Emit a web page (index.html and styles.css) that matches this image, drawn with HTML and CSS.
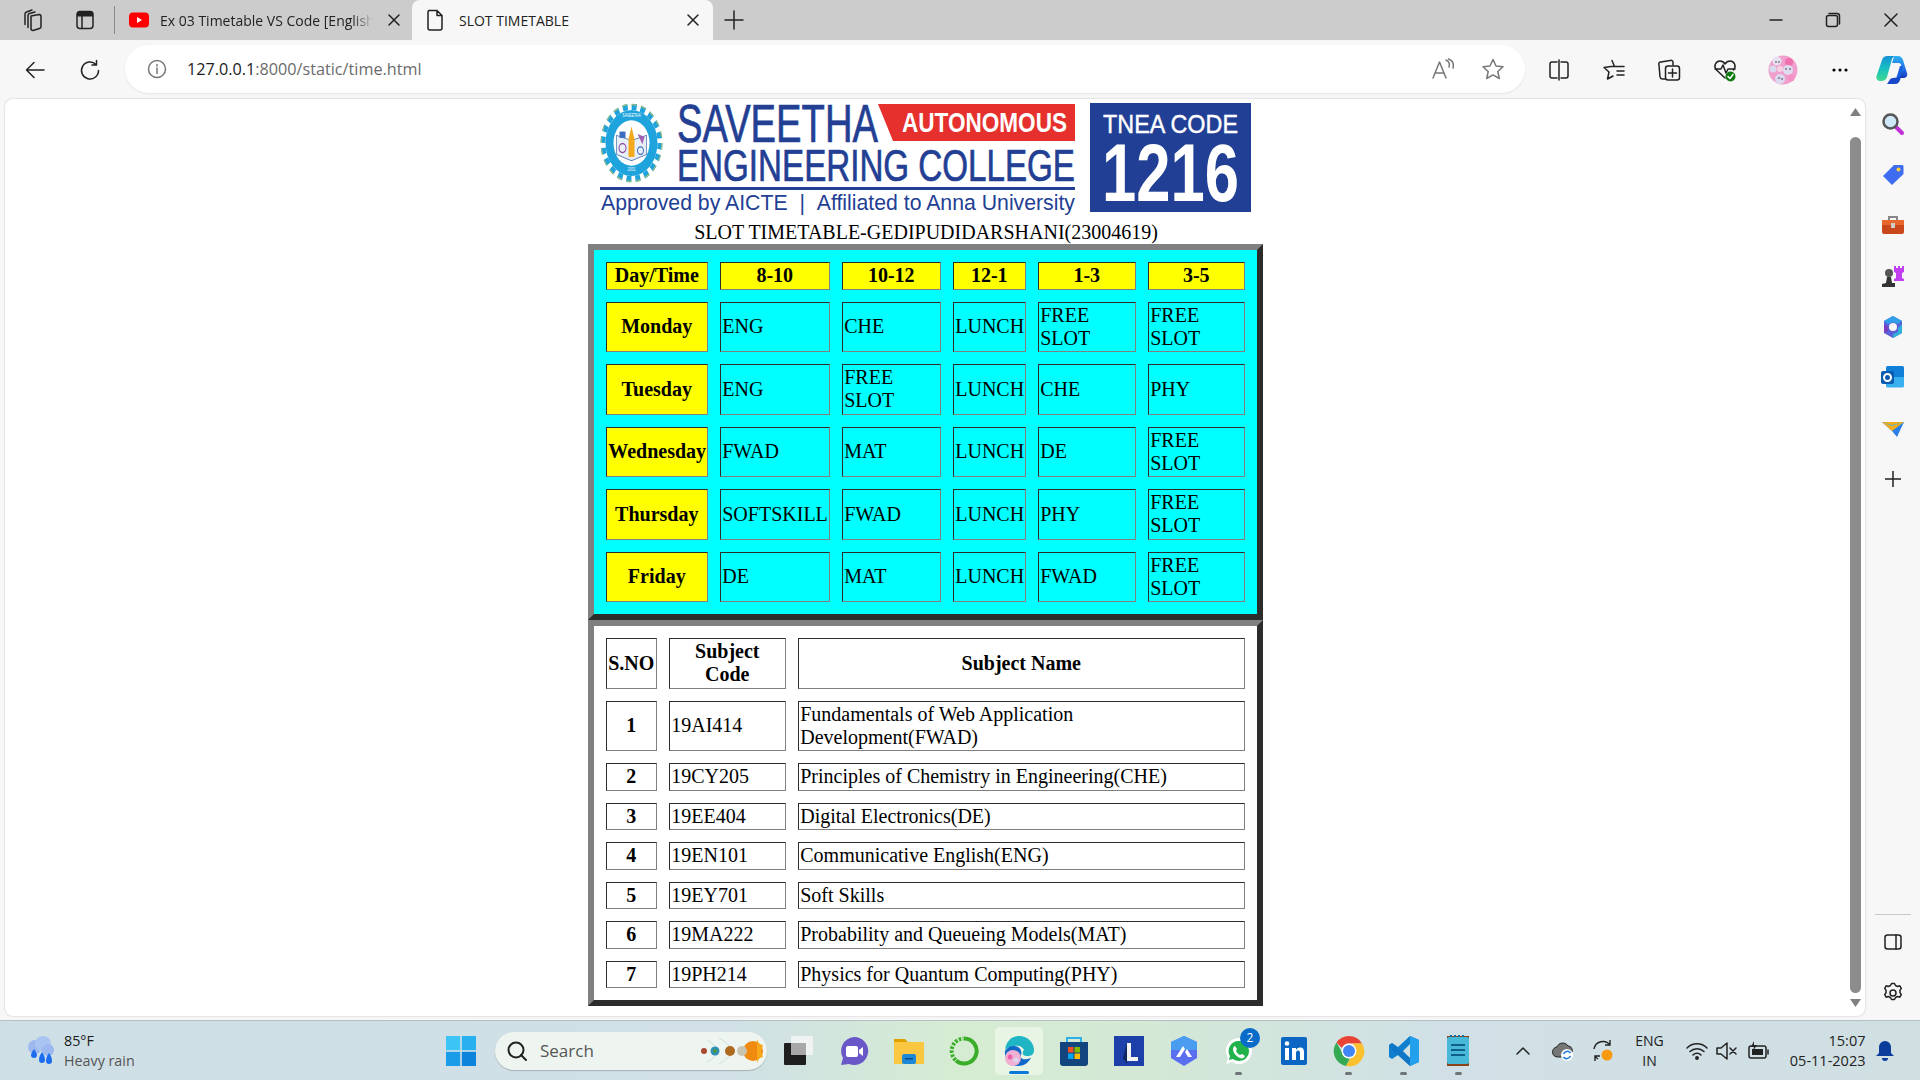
FILE: index.html
```html
<!DOCTYPE html>
<html lang="en">
<head>
<meta charset="utf-8">
<title>SLOT TIMETABLE</title>
<link rel="stylesheet" href="styles.css">
</head>
<body>
<div class="tabstrip">
  <div class="sbox w64"><svg class="i" width="24" height="24" viewBox="0 0 24 24"><path d="M11 8L19 6.500a2 2 0 0 1 2 2V18.500a2 2 0 0 1-1.500 2L13 22.500a2 2 0 0 1-2-2zM8 19.500V7.500a2 2 0 0 1 1.500-2L15 4M5 16.500V6a2 2 0 0 1 1.500-2L12 2"/></svg></div>
  <div class="sbox w42"><svg class="i" width="24" height="24" viewBox="0 0 24 24"><rect x="4" y="3.500" width="16" height="17" rx="3"/><path d="M9 8v12.500"/><path class="fill" d="M7 3h10a3 3 0 0 1 3 3v2.500H4V6a3 3 0 0 1 3-3z"/></svg></div>
  <div class="vsep"></div>
  <div class="tab">
    <svg width="20" height="16" viewBox="0 0 20 16"><rect width="20" height="15" y="0.500" rx="4" fill="#f00"/><path d="M8 5l5 3-5 3z" fill="#fff"/></svg>
    <span class="tabtext fade">Ex 03 Timetable VS Code [English</span>
    <svg class="i close" width="14" height="14" viewBox="0 0 14 14"><path d="M2 2l10 10M12 2L2 12"/></svg>
  </div>
  <div class="tab active">
    <svg class="i" width="18" height="22" viewBox="0 0 18 22"><path d="M3 1.500h8l5 5v12.500a2 2 0 0 1-2 2H4a2 2 0 0 1-2-2V3a2 2 0 0 1 1-1.500zM11 1.500v5h5"/></svg>
    <span class="tabtext">SLOT TIMETABLE</span>
    <svg class="i close" width="14" height="14" viewBox="0 0 14 14"><path d="M2 2l10 10M12 2L2 12"/></svg>
  </div>
  <div class="sbox w42"><svg class="i" width="20" height="20" viewBox="0 0 20 20"><path d="M10 1v18M1 10h18"/></svg></div>
  <div class="grow"></div>
  <div class="sbox w58"><svg class="i" width="14" height="14" viewBox="0 0 14 14"><path d="M1 7h12"/></svg></div>
  <div class="sbox w58"><svg class="i" width="16" height="16" viewBox="0 0 16 16"><rect x="1.500" y="3.500" width="11" height="11" rx="2"/><path d="M4 1.500h8a2.500 2.500 0 0 1 2.500 2.500v8"/></svg></div>
  <div class="sbox w58"><svg class="i" width="16" height="16" viewBox="0 0 16 16"><path d="M2 2l12 12M14 2L2 14"/></svg></div>
</div>

<div class="toolbar">
  <div class="navbox"><svg class="i" width="22" height="22" viewBox="0 0 22 22"><path d="M20 11H3M10 3.500L2.500 11l7.500 7.500"/></svg></div>
  <div class="navbox"><svg class="i" width="22" height="22" viewBox="0 0 22 22"><path d="M17 5.500a8.500 8.500 0 1 0 2.500 6M17.500 1.500v4.500H13"/></svg></div>
  <div class="address">
    <svg class="i gr" width="20" height="20" viewBox="0 0 20 20"><circle cx="10" cy="10" r="8.500"/><path d="M10 9v5.500M10 5.500v1.500"/></svg>
    <span class="url"><span class="host">127.0.0.1</span>:8000/static/time.html</span>
    <span class="grow"></span>
    <svg class="i gr" width="24" height="22" viewBox="0 0 24 22"><path d="M2 20L8.500 4 15 20M4.500 15h8M15 2c3 1 4 4 3 7M17.500 1c4 1.500 5.500 5 4.500 9"/></svg>
    <svg class="i gr star" width="24" height="24" viewBox="0 0 24 24"><path d="M12 2.500l3 6.500 7 .8-5.200 4.700 1.500 7L12 17.900l-6.300 3.600 1.500-7L2 9.800 9 9z"/></svg>
  </div>
  <div class="tools">
    <div class="tool"><svg class="i" width="22" height="22" viewBox="0 0 22 22"><path d="M9 3H4a2 2 0 0 0-2 2v12a2 2 0 0 0 2 2h5M13 3h5a2 2 0 0 1 2 2v12a2 2 0 0 1-2 2h-5M11 1v20"/></svg></div>
    <div class="tool"><svg class="i" width="24" height="24" viewBox="0 0 24 24"><path d="M10 2.500l2.500 6H9l-7 1 5 4.500-1.500 7L11 18M12.500 8.500H22M15 13h7M15 17h7"/></svg></div>
    <div class="tool"><svg class="i" width="24" height="24" viewBox="0 0 24 24"><path d="M8 21H6a3 3 0 0 1-3-2L2 7a2 2 0 0 1 2-3l9-1.500a2 2 0 0 1 3 2V7"/><rect x="8.500" y="8" width="14" height="14" rx="2.500"/><path d="M15.500 11v8M11.500 15h8"/></svg></div>
    <div class="tool"><svg class="i" width="24" height="24" viewBox="0 0 24 24"><path d="M12 20L3.500 12C0 8 3 3 7 3c2.500 0 4 1.500 5 3 1-1.500 2.500-3 5-3 4 0 7 5 3.500 9M2 11h6l2-4 3 8 2-4h7"/><circle cx="17.500" cy="18.500" r="5" fill="#0f7b0f" stroke="none"/><path class="wht" d="M15 18.500l2 2 3-4"/></svg></div>
    <div class="tool pf"><svg width="30" height="30" viewBox="0 0 30 30"><circle cx="15" cy="15" r="14.500" fill="#f0a0cc"/><circle cx="9" cy="6" r="4.500" fill="#e6e2f2"/><circle cx="5" cy="14" r="3.500" fill="#d8d8ee"/><circle cx="21" cy="7" r="4" fill="#f070b0"/><circle cx="20" cy="15" r="5" fill="#e0dcf0"/><circle cx="12" cy="14" r="3" fill="#f8d0e4"/><circle cx="12" cy="24" r="5" fill="#dcd8f0"/><circle cx="23" cy="23" r="3.500" fill="#f490c4"/><circle cx="8" cy="7" r=".8" fill="#333"/><circle cx="11" cy="7" r=".8" fill="#333"/><circle cx="18" cy="14" r=".8" fill="#333"/><circle cx="22" cy="14" r=".8" fill="#333"/><circle cx="11" cy="23" r=".8" fill="#333"/><circle cx="14" cy="24" r=".8" fill="#333"/></svg></div>
    <div class="tool dots"><svg width="18" height="6" viewBox="0 0 18 6"><circle cx="3" cy="3" r="1.600"/><circle cx="9" cy="3" r="1.600"/><circle cx="15" cy="3" r="1.600"/></svg></div>
    <div class="tool cop"><svg width="32" height="30" viewBox="0 0 32 30">
      <defs>
        <linearGradient id="cl" x1="0" y1="0" x2="0" y2="1"><stop offset="0" stop-color="#1590d8"/><stop offset=".5" stop-color="#18c0c0"/><stop offset="1" stop-color="#40d890"/></linearGradient>
        <linearGradient id="cr" x1="0" y1="0" x2="0" y2="1"><stop offset="0" stop-color="#30b0f0"/><stop offset=".6" stop-color="#2070e8"/><stop offset="1" stop-color="#1838b8"/></linearGradient>
      </defs>
      <path d="M11 1h9c-2 0-3 1-4 3L11 22c-1 3-3 4-6 4H4c-3 0-4-3-3.500-5L6 5c1-3 3-4 5-4z" fill="url(#cl)"/>
      <path d="M18 1h4c3 0 4 2 5 4l4 13c1 3-1 5-4 5h-5l3-11c1-3-1-4-3-4h-6l1-3c1-3 1-4 1-4z" fill="url(#cr)"/>
      <path d="M14 29c3 0 5-2 6-5l4-13 3 0-4 14c-1 3-3 4-5 4z" fill="#1a60e0"/>
      <path d="M11 29h8c2 0 4-1 5-4l1-3-8 1c-2 0-3 1-4 3z" fill="#1848c8"/>
    </svg></div>
  </div>
</div>

<div class="main">
  <div class="panel">
    <div class="page">
      <svg class="logo" width="675" height="121" viewBox="588 99 675 121">
        <g transform="translate(631.500 143) scale(1 1.27)">
          <circle r="26" fill="#1ea3dc"/>
          <circle r="28.500" fill="none" stroke="#1ea3dc" stroke-width="5" stroke-dasharray="5 3.950"/>
          <circle r="30.300" fill="none" stroke="#d8c94a" stroke-width="1" stroke-dasharray="5 4.500" opacity=".7"/>
          <circle r="18" fill="#fff"/>
          <path d="M-15 -6L0 -2 15 -6V9L0 14-15 9z" fill="#e9eff7" stroke="#5b7fb6" stroke-width=".8"/>
          <path d="M0 -13L3 -3V11H-3V-3z" fill="#f4a91d"/>
          <circle cx="-9" cy="4" r="3.500" fill="none" stroke="#8a3fa0" stroke-width="1"/>
          <rect x="-12" y="-9" width="6" height="5" fill="#3b6cc0"/>
          <path d="M6 -7l7 2-2 6z" fill="#a060b0"/>
          <circle cx="9" cy="6" r="3" fill="none" stroke="#3b6cc0" stroke-width="1"/>
          <text class="lg-tiny" y="-20.500" text-anchor="middle">SAVEETHA</text>
          <text class="lg-tiny" y="22" text-anchor="middle">2001</text>
        </g>
        <text class="lg heavy" x="677" y="142" font-size="53" textLength="201" lengthAdjust="spacingAndGlyphs">SAVEETHA</text>
        <path d="M878 104H1075V141H893z" fill="#e5302e"/>
        <text class="lg-w lg-b" x="902" y="132" font-size="28" textLength="165" lengthAdjust="spacingAndGlyphs">AUTONOMOUS</text>
        <text class="lg heavy" x="677" y="181" font-size="43.500" textLength="398" lengthAdjust="spacingAndGlyphs">ENGINEERING COLLEGE</text>
        <rect x="600" y="187" width="475" height="3" fill="#233f94"/>
        <text class="lg" x="601" y="210" font-size="22.500" textLength="474" lengthAdjust="spacingAndGlyphs">Approved by AICTE &#160;| &#160;Affiliated to Anna University</text>
        <rect x="1090" y="103" width="161" height="109" fill="#213f94"/>
        <text class="lg-w heavyw" x="1103" y="133" font-size="25.500" textLength="135" lengthAdjust="spacingAndGlyphs">TNEA CODE</text>
        <text class="lg-w lg-b" x="1102" y="201" font-size="81" textLength="137" lengthAdjust="spacingAndGlyphs">1216</text>
      </svg>
      <div class="title">SLOT TIMETABLE-GEDIPUDIDARSHANI(23004619)</div>
      <table class="tt slot">
        <colgroup><col class="c1"><col class="c2"><col class="c3"><col class="c4"><col class="c5"><col class="c6"></colgroup>
        <tr><th>Day/Time</th><th>8-10</th><th>10-12</th><th>12-1</th><th>1-3</th><th>3-5</th></tr>
        <tr><th>Monday</th><td>ENG</td><td>CHE</td><td>LUNCH</td><td>FREE SLOT</td><td>FREE SLOT</td></tr>
        <tr><th>Tuesday</th><td>ENG</td><td>FREE SLOT</td><td>LUNCH</td><td>CHE</td><td>PHY</td></tr>
        <tr><th>Wednesday</th><td>FWAD</td><td>MAT</td><td>LUNCH</td><td>DE</td><td>FREE SLOT</td></tr>
        <tr><th>Thursday</th><td>SOFTSKILL</td><td>FWAD</td><td>LUNCH</td><td>PHY</td><td>FREE SLOT</td></tr>
        <tr><th>Friday</th><td>DE</td><td>MAT</td><td>LUNCH</td><td>FWAD</td><td>FREE SLOT</td></tr>
      </table>
      <table class="tt subj">
        <colgroup><col class="s1"><col class="s2"><col class="s3"></colgroup>
        <tr><th>S.NO</th><th>Subject Code</th><th>Subject Name</th></tr>
        <tr><th>1</th><td>19AI414</td><td>Fundamentals of Web Application Development(FWAD)</td></tr>
        <tr><th>2</th><td>19CY205</td><td>Principles of Chemistry in Engineering(CHE)</td></tr>
        <tr><th>3</th><td>19EE404</td><td>Digital Electronics(DE)</td></tr>
        <tr><th>4</th><td>19EN101</td><td>Communicative English(ENG)</td></tr>
        <tr><th>5</th><td>19EY701</td><td>Soft Skills</td></tr>
        <tr><th>6</th><td>19MA222</td><td>Probability and Queueing Models(MAT)</td></tr>
        <tr><th>7</th><td>19PH214</td><td>Physics for Quantum Computing(PHY)</td></tr>
      </table>
    </div>
    <div class="scroll">
      <svg width="11" height="8" viewBox="0 0 11 8"><path d="M5.500 0L11 8H0z" fill="#808080"/></svg>
      <div class="thumb"></div>
      <svg width="11" height="8" viewBox="0 0 11 8"><path d="M0 0h11L5.500 8z" fill="#808080"/></svg>
    </div>
  </div>
  <div class="side">
    <div class="sicon"><svg width="24" height="24" viewBox="0 0 24 24"><path d="M14 14l7 7" stroke="#c030d8" stroke-width="4" stroke-linecap="round"/><circle cx="9.500" cy="9.500" r="7" fill="#cfe8f8" stroke="#555" stroke-width="2.500"/></svg></div>
    <div class="sicon"><svg width="24" height="24" viewBox="0 0 24 24"><path d="M13 2h8a1.500 1.500 0 0 1 1.500 1.500V11L11 22 2 13z" fill="#3f6cf0"/><circle cx="17.500" cy="6.500" r="2" fill="#f8d040"/></svg></div>
    <div class="sicon"><svg width="24" height="24" viewBox="0 0 24 24"><path d="M8 7V4h8v3" fill="none" stroke="#888" stroke-width="2"/><rect x="1" y="7" width="22" height="14" rx="2" fill="#c8481c"/><rect x="1" y="7" width="22" height="5" fill="#e8672c"/><rect x="10" y="10" width="4" height="5" fill="#ccc"/></svg></div>
    <div class="sicon"><svg width="24" height="24" viewBox="0 0 24 24"><path d="M13 2h2v2h2V2h2v2h2V2h2v6l-2 1v5l2 1v2H13v-2l2-1V9l-2-1z" fill="#c040f0"/><circle cx="8" cy="9" r="4" fill="#555"/><path d="M6 13h4l1 6h3v4H1v-3l4-1z" fill="#333"/></svg></div>
    <div class="sicon"><svg width="24" height="24" viewBox="0 0 24 24"><path d="M12 1l9 5v12l-9 5-9-5V6z" fill="#5a5fd8"/><path d="M3 6l9-5 9 5-4 3-5-2-5 2z" fill="#2f9fe8"/><path d="M3 18V9l4 3v4z" fill="#7a3fc0"/><path d="M12 23l9-5V9l-4 4v4l-5 2z" fill="#2fb0d8"/><circle cx="12" cy="12" r="4" fill="#f6f6f6"/></svg></div>
    <div class="sicon"><svg width="24" height="24" viewBox="0 0 24 24"><rect x="5" y="1" width="18" height="20" rx="1.500" fill="#0f7fd8"/><path d="M5 12h18v9a1.500 1.500 0 0 1-1.500 1.500h-15A1.500 1.500 0 0 1 5 21z" fill="#38b0f0"/><rect x="0" y="6" width="13" height="13" rx="2" fill="#0a5cb0"/><circle cx="6.500" cy="12.500" r="3.500" fill="none" stroke="#fff" stroke-width="2"/></svg></div>
    <div class="sicon"><svg width="24" height="24" viewBox="0 0 24 24"><path d="M1 6h22L16 21l-5-6z" fill="#2a80e8"/><path d="M1 6l22 0-12 9z" fill="#f4ae1c"/><path d="M1 6l10 3 12-3-12 4z" fill="#40b0f0"/></svg></div>
    <div class="sicon"><svg class="i" width="16" height="16" viewBox="0 0 16 16"><path d="M8 0v16M0 8h16"/></svg></div>
    <div class="grow"></div>
    <div class="hline"></div>
    <div class="sicon"><svg class="i" width="20" height="20" viewBox="0 0 20 20"><rect x="2" y="3" width="16" height="14" rx="2.500"/><path d="M13 3v14"/></svg></div>
    <div class="sicon last"><svg class="i" width="22" height="22" viewBox="0 0 22 22"><circle cx="11" cy="11" r="3"/><path d="M8.500 3.500L9.500 1.500h3l1 2 2.200 1 2.100-.7 1.500 2.600-1.300 1.800v2.600l1.300 1.800-1.500 2.600-2.100-.7-2.200 1-1 2h-3l-1-2-2.200-1-2.100.7-1.500-2.600 1.300-1.800V8.200L2.700 6.400l1.500-2.600 2.100.7z"/></svg></div>
  </div>
</div>

<div class="taskbar">
  <div class="weather">
    <svg width="32" height="32" viewBox="0 0 32 32"><circle cx="11" cy="12" r="7" fill="#9cb8ee"/><circle cx="19" cy="9" r="8" fill="#aac4f2"/><circle cx="24" cy="15" r="6" fill="#9cb8ee"/><path d="M10 14c2 3 3 5 3 6a3 3 0 0 1-6 0c0-1 1-3 3-6zM18 17c2 3 3 5 3 8a3 3 0 0 1-6 0c0-3 1-5 3-8zM25 18c2 3 3 5 3 8a3 3 0 0 1-6 0c0-3 1-5 3-8z" fill="#1c6cf0"/></svg>
    <div class="wtext"><div class="tdark">85°F</div><div class="tgray">Heavy rain</div></div>
  </div>
  <svg class="win" width="30" height="30" viewBox="0 0 30 30"><rect width="14.200" height="14.200" fill="#3cc4f4"/><rect x="15.800" width="14.200" height="14.200" fill="#28b0f0"/><rect y="15.800" width="14.200" height="14.200" fill="#1a9ce8"/><rect x="15.800" y="15.800" width="14.200" height="14.200" fill="#0c84dc"/></svg>
  <div class="search">
    <svg class="i sg" width="22" height="22" viewBox="0 0 22 22"><circle cx="10" cy="10" r="7.500"/><path d="M15 15l5 5"/></svg>
    <span class="stext">Search</span>
    <span class="grow"></span>
    <svg width="62" height="30" viewBox="0 0 62 30"><path d="M6 4q20 11 0 22M18 2q24 13 0 26" fill="none" stroke="#cfe0d8"/><circle cx="52" cy="15" r="10" fill="#f08a10"/><path d="M56 3l2 5 4 1-2 6 2 6-4 1-2 5z" fill="#f8a818"/><circle cx="41" cy="15" r="5" fill="#c8c4b0"/><circle cx="29" cy="15" r="5" fill="#b06a20"/><circle cx="14" cy="15" r="4.500" fill="#2f8fb8"/><circle cx="14" cy="15" r="2" fill="#4a9a40"/><circle cx="3" cy="15" r="3" fill="#a84a30"/></svg>
  </div>
  <div class="apps">
    <div class="app"><svg width="30" height="30" viewBox="0 0 30 30"><rect x="0" y="7" width="22" height="22" rx="1" fill="#1e1e1e"/><rect x="7" y="0" width="22" height="19" rx="1" fill="#f6f6f6" opacity=".85"/><rect x="7" y="7" width="15" height="12" fill="#a8a8a8"/></svg></div>
    <div class="app"><svg width="30" height="30" viewBox="0 0 30 30"><path d="M15 1a14 14 0 1 1-5 27l-8 1 2-7A14 14 0 0 1 15 1z" fill="#6a58c8"/><rect x="7" y="10" width="12" height="11" rx="2" fill="#fff"/><path d="M20 14l4-3v9l-4-3z" fill="#fff"/></svg></div>
    <div class="app"><svg width="30" height="30" viewBox="0 0 30 30"><path d="M0 3h11l3 3h16v6H0z" fill="#e0a000"/><path d="M0 6h30v22H0z" fill="#fbc640"/><rect x="8" y="18" width="14" height="10" rx="2" fill="#1e88d8"/><rect x="11" y="22" width="8" height="1.500" fill="#0a4a88"/></svg></div>
    <div class="app"><svg width="30" height="32" viewBox="0 0 30 32"><path d="M15 3.500a12.500 12.500 0 1 1-8 22" fill="none" stroke="#3aae28" stroke-width="4"/><path d="M6.500 25a12.500 12.500 0 0 1 8-21.500" fill="none" stroke="#3aae28" stroke-width="4" stroke-dasharray="2.500 1.500"/></svg></div>
    <div class="app current"><svg width="32" height="32" viewBox="0 0 32 32"><path d="M2 15C3 6 9 1 16 1c9 0 15 7 15 14 0 5-3 6-7 6-5 0-5-4-3-6-1-3-5-5-9-4-5 1-9 2-10 4z" fill="#1fb5c4"/><path d="M2 16c3-5 9-6 13-4 3 2 4 5 3 8-1 5 4 5 10 3-3 5-7 8-13 8-8 0-14-7-13-15z" fill="#0f67c8"/><ellipse cx="10" cy="23" rx="8" ry="8" fill="#efb0d4"/><circle cx="7" cy="22" r="2.500" fill="#f05fa8"/><circle cx="13" cy="25" r="2.500" fill="#dcd4ec"/></svg></div>
    <div class="app"><svg width="30" height="32" viewBox="0 0 30 32"><path d="M8 7V3h14v4" fill="none" stroke="#2fb0e8" stroke-width="2"/><path d="M1 7h28v21a3 3 0 0 1-3 3H4a3 3 0 0 1-3-3z" fill="#12457e"/><rect x="9" y="12" width="5.500" height="5.500" fill="#f25022"/><rect x="15.500" y="12" width="5.500" height="5.500" fill="#7fba00"/><rect x="9" y="18.500" width="5.500" height="5.500" fill="#00a4ef"/><rect x="15.500" y="18.500" width="5.500" height="5.500" fill="#ffb900"/></svg></div>
    <div class="app"><svg width="30" height="30" viewBox="0 0 30 30"><rect width="30" height="30" fill="#1c3faa"/><path d="M9 22l4-15v21z" fill="#0f2860"/><path d="M13 7h4v14h7v4H13z" fill="#f4f4f4"/></svg></div>
    <div class="app"><svg width="30" height="32" viewBox="0 0 30 32"><path d="M15 1l13 6 0 16-13 8-13-8V7z" fill="#5a6ff0"/><path d="M2 7l13-6 13 6v8H2z" fill="#4a9cf0"/><path d="M7 22l7-11 2 3-5 8zM23 22l-5-8-2 3 3 5z" fill="#fff"/></svg></div>
    <div class="app run"><svg width="30" height="32" viewBox="0 0 30 32"><path d="M15 3a13 13 0 1 1-7 24l-6 2 2-6A13 13 0 0 1 15 3z" fill="#fff"/><path d="M15 6a10 10 0 1 1-6 18l-4 1 1-4A10 10 0 0 1 15 6z" fill="#22b24c"/><path d="M11 11l2 3-1 2c1 2 2 3 4 4l2-1 3 2c-1 3-4 3-7 1s-5-5-5-8c0-1 1-3 2-3z" fill="#fff"/></svg><span class="badge">2</span></div>
    <div class="app"><svg width="26" height="28" viewBox="0 0 26 28"><rect width="26" height="28" rx="2" fill="#0a66c2"/><rect x="4" y="11" width="4" height="12" fill="#fff"/><circle cx="6" cy="6.500" r="2.300" fill="#fff"/><path d="M11 11h4v2c1-2 3-2.500 4.500-2.500C22 10.500 23 12.500 23 15v8h-4v-7c0-1.500-.5-2.500-2-2.500S15 15 15 16v7h-4z" fill="#fff"/></svg></div>
    <div class="app run"><svg width="32" height="32" viewBox="0 0 32 32"><path d="M16 1a15 15 0 0 1 13 7.500H16a7.500 7.500 0 0 0-7 4.500L3.500 7.500A15 15 0 0 1 16 1z" fill="#ea4335"/><path d="M3.500 7.500L10 19a7.500 7.500 0 0 0 7 4.500L13 31A15 15 0 0 1 3.500 7.500z" fill="#34a853"/><path d="M29 8.500A15 15 0 0 1 13 31l6-10a7.500 7.500 0 0 0 0-12.500z" fill="#fbc02d"/><circle cx="16" cy="16" r="7.500" fill="#fff"/><circle cx="16" cy="16" r="6" fill="#4285f4"/></svg></div>
    <div class="app run"><svg width="30" height="30" viewBox="0 0 30 30"><path d="M21 0l9 4v22l-9 4-12-11-6 4-3-2V9l3-2 6 4zM21 8l-7 7 7 7z" fill="#0f7fd0"/><path d="M21 0l9 4v22l-9 4z" fill="#22a0ec"/><path d="M0 9l3-2 18 15v8L0 11z" fill="#1070c0" opacity=".6"/></svg></div>
    <div class="app run"><svg width="24" height="32" viewBox="0 0 24 32"><rect y="1" width="22" height="30" fill="#8a4418"/><rect y="2" width="22" height="27" rx="2" fill="#48b8d8"/><path d="M4 2V0M8 2V0M12 2V0M16 2V0" stroke="#1a6a90" stroke-width="2"/><path d="M4 10h14M4 15h14M4 20h14" stroke="#0f5f88" stroke-width="2"/></svg></div>
  </div>
  <div class="tray">
    <div class="t40"><svg class="i" width="16" height="10" viewBox="0 0 16 10"><path d="M2 8l6-6 6 6"/></svg></div>
    <div class="t40"><svg width="24" height="22" viewBox="0 0 24 22"><path d="M7 17a5 5 0 0 1-1-10c1-4 8-6 11-1 3 0 5 3 4 6-4 0-5 2-6 5z" fill="#777" stroke="#222"/><circle cx="16" cy="15" r="6" fill="#fff"/><path d="M12.500 14a4 4 0 0 1 7-1M19.500 16a4 4 0 0 1-7 1" fill="none" stroke="#1c78e0" stroke-width="1.500"/></svg></div>
    <div class="t40"><svg width="24" height="24" viewBox="0 0 24 24"><path d="M3 10a9 9 0 0 1 16-4M19 1v5h-5M4 22v-5h5M4 17a9 9 0 0 0 3 3" fill="none" stroke="#222" stroke-width="1.400"/><circle cx="16" cy="16" r="5.500" fill="#f89a10"/></svg></div>
    <div class="lang"><div>ENG</div><div>IN</div></div>
    <div class="t30 ml5"><svg class="i" width="22" height="18" viewBox="0 0 22 18"><path d="M1 6a14 14 0 0 1 20 0M4 9.500a10 10 0 0 1 14 0M7 13a5.500 5.500 0 0 1 8 0"/><circle cx="11" cy="16" r="1.200" fill="#222"/></svg></div>
    <div class="t30"><svg class="i" width="22" height="18" viewBox="0 0 22 18"><path d="M1 6h4l6-5v16l-6-5H1zM14 6l6 6M20 6l-6 6"/></svg></div>
    <div class="t30 ml2"><svg class="i" width="22" height="20" viewBox="0 0 22 20"><rect x="1" y="5" width="17" height="12" rx="2"/><path d="M20 9v4"/><path class="fill" d="M4 8h11v6H4z"/><path class="fill" d="M6 0L3 6h3l-1 4 4-6H6z"/></svg></div>
    <div class="clock"><div>15:07</div><div>05-11-2023</div></div>
    <div class="t30 ml4"><svg width="18" height="22" viewBox="0 0 18 22"><path d="M9 1a6 6 0 0 1 6 6v6l3 3H0l3-3V7a6 6 0 0 1 6-6zM6 18h6a3 3 0 0 1-6 0z" fill="#0a3d9c"/></svg></div>
  </div>
</div>
</body>
</html>
```
FILE: styles.css
```css
* { box-sizing: border-box; }
html, body { margin: 0; height: 100%; overflow: hidden; }
body { width: 1920px; height: 1080px; display: flex; flex-direction: column; background: #f7f7f7; font-family: "Open Sans", "Noto Sans", sans-serif; color: #1a1a1a; }
svg { display: block; flex: none; }
.grow { flex: 1 1 auto; }
.i { fill: none; stroke: #222; stroke-width: 1.500; stroke-linecap: round; stroke-linejoin: round; }
.i.gr { stroke: #777; }
.i .fill { fill: #222; stroke: none; }
.wht { fill: none; stroke: #fff; stroke-width: 1.500; }

.tabstrip { height: 40px; flex: none; display: flex; align-items: stretch; background: #cccccc; }
.sbox { display: flex; align-items: center; justify-content: center; }
.w64 { width: 64px; }
.w42 { width: 42px; }
.w58 { width: 57.700px; }
.vsep { width: 1px; height: 28px; margin: 6px 0 0 8px; background: #8a8a8a; }
.tab { display: flex; align-items: center; width: 297px; padding: 0 11px 0 14px; font-size: 14px; color: #222; }
.tab.active { width: 301px; padding: 0 13px 0 14px; background: #f7f7f7; border-radius: 8px 8px 0 0; }
.tabtext { flex: 1 1 auto; overflow: hidden; white-space: nowrap; margin-left: 11px; }
.active .tabtext { margin-left: 15px; }
.fade { -webkit-mask-image: linear-gradient(90deg, #000 90%, transparent); mask-image: linear-gradient(90deg, #000 90%, transparent); margin-right: 8px; }
.close { margin-left: 6px; }

.toolbar { height: 59px; flex: none; display: flex; align-items: center; padding: 0 0 0 7.500px; background: #f7f7f7; }
.navbox { width: 55px; flex: none; display: flex; justify-content: center; }
.address { flex: none; width: 1400px; height: 48px; margin: 0 0 1px 7.500px; padding: 0 20px 0 22px; display: flex; align-items: center; background: #fff; border-radius: 24px; box-shadow: 0 1px 2px rgba(0,0,0,.08); }
.url { margin-left: 20px; font-size: 16.200px; color: #6b6b6b; }
.host { color: #1a1a1a; }
.star { margin-left: 26px; }
.tools { display: flex; flex: none; margin-left: 6px; }
.tool { width: 55.300px; flex: none; display: flex; justify-content: center; align-items: center; }
.tool.pf { margin-left: 3px; }
.tool.dots { margin-left: 2px; }
.tool.cop { margin-left: -2px; width: 52px; }

.main { flex: 1 1 auto; min-height: 0; display: flex; }
.panel { width: 1860px; margin: 0 0 4px 5px; display: flex; background: #fff; border-radius: 8px; box-shadow: 0 0 2px rgba(0,0,0,.25); overflow: hidden; }
.page { width: 1840px; display: flex; flex-direction: column; align-items: center; font-family: "Liberation Serif", serif; color: #000; }
.logo { margin-bottom: 1px; overflow: visible; }
.lg { fill: #233f94; font-family: "Liberation Sans", sans-serif; }
.heavy { stroke: #233f94; stroke-width: .7px; }
.heavyw { stroke: #fff; stroke-width: .4px; }
.lg-w { fill: #fff; font-family: "Liberation Sans", sans-serif; }
.lg-b { font-weight: 700; }
.lg-tiny { fill: #fff; font-family: "Liberation Sans", sans-serif; font-size: 3.500px; }
.title { font-size: 20px; line-height: 23px; height: 23px; padding-left: 2px; }

.tt { width: 675px; table-layout: fixed; border-collapse: separate; border-spacing: 12.500px; border: 6px outset #808080; font-size: 20px; line-height: 23px; }
.tt th, .tt td { border: 1px inset #808080; padding: 1.250px 1.250px 1.250px 1.750px; }
.tt th { text-align: center; font-weight: 700; }
.tt td { text-align: left; }
.slot { background: #00ffff; }
.slot th { background: #ffff00; }
.subj { background: #fff; }
.c1 { width: 102px; }
.c2 { width: 110px; }
.c3 { width: 99px; }
.c4 { width: 73px; }
.c5 { width: 98px; }
.c6 { width: 97px; }
.s1 { width: 51px; }
.s2 { width: 117px; }
.s3 { width: 447px; }

.scroll { width: 20px; padding: 9px 0 9px 5px; display: flex; flex-direction: column; align-items: flex-start; }
.thumb { width: 11px; flex: 1 1 auto; margin: 21px 0 6px; border-radius: 6px; background: #8c8c8c; }

.side { flex: 1 1 auto; display: flex; flex-direction: column; align-items: center; padding-top: 13px; }
.sicon { height: 24px; margin-bottom: 26.700px; display: flex; align-items: center; justify-content: center; }
.sicon.last { margin-bottom: 15px; }
.hline { width: 36px; height: 1px; background: #c8c8c8; margin-bottom: 15px; }

.taskbar { height: 60px; flex: none; display: flex; align-items: center; background: linear-gradient(90deg, #cfdfe6 0%, #d0e0e6 38%, #d6ecd2 50%, #d4e8d6 60%, #d0e0e6 75%, #cfdfe2 100%); border-top: 1px solid #b4c0c2; font-size: 14px; }
.weather { width: 446px; flex: none; display: flex; align-items: center; padding-left: 24px; }
.wtext { margin-left: 8px; line-height: 19.500px; font-size: 14.300px; }
.tdark { color: #1a1a1a; }
.tgray { color: #555; }
.search { width: 272px; height: 38px; margin-left: 19px; padding: 0 4px 0 11px; display: flex; align-items: center; background: #eef5f0; border-radius: 19px; box-shadow: 0 1px 1px rgba(0,0,0,.2); }
.sg { stroke-width: 2; }
.stext { margin-left: 12px; font-size: 17px; color: #555; }
.apps { display: flex; margin-left: 4px; }
.app { width: 55px; height: 48px; position: relative; display: flex; align-items: center; justify-content: center; }
.app.current { background: #e8f4e4; border-radius: 5px; width: 48px; margin: 0 3.500px; }
.app.current::after { content: ""; position: absolute; left: 14px; bottom: 1px; width: 20px; height: 3px; border-radius: 2px; background: #0a78d8; }
.app.run::after { content: ""; position: absolute; left: 24px; bottom: 0; width: 7px; height: 3px; border-radius: 2px; background: #6e7478; }
.badge { position: absolute; left: 29px; top: 1px; width: 20px; height: 20px; border-radius: 50%; background: #0a6cc8; color: #fff; font-size: 12px; line-height: 20px; text-align: center; }
.tray { display: flex; align-items: center; margin-left: 16.500px; color: #222; }
.t40 { width: 40px; display: flex; justify-content: center; }
.t30 { width: 30px; display: flex; justify-content: center; }
.ml5 { margin-left: 5px; }
.ml2 { margin-left: 2px; }
.ml4 { margin-left: 4px; }
.lang { width: 54px; text-align: center; line-height: 20px; font-size: 14px; }
.clock { width: 92px; text-align: right; line-height: 20px; font-size: 14.500px; }
```
